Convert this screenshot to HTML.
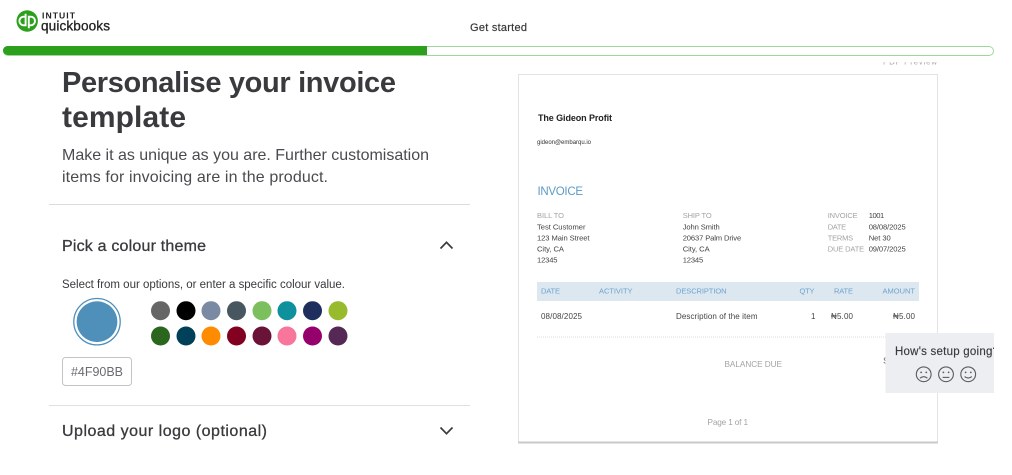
<!DOCTYPE html>
<html lang="en">
<head>
<meta charset="utf-8">
<title>Personalise your invoice template</title>
<style>
html,body{margin:0;padding:0;background:#fff;width:1012px;height:475px;overflow:hidden}
svg{display:block;position:absolute;left:0;top:0}
text{font-family:"Liberation Sans",sans-serif;white-space:pre}
.d{font-size:7.6px;fill:#444}
.r{font-size:8px;fill:#444}
.l{font-size:7.5px;fill:#a3a3a3}
.h{font-size:7.5px;fill:#6fa3cc}
</style>
</head>
<body>
<svg width="1012" height="475" viewBox="0 0 1012 475" xmlns="http://www.w3.org/2000/svg">
<defs>
<clipPath id="c1"><rect x="880" y="62.3" width="60" height="2.5"/></clipPath>
<clipPath id="c2"><rect x="885" y="333" width="109" height="60"/></clipPath>
</defs>
<rect width="1012" height="475" fill="#fff"/>

<!-- logo -->
<circle cx="27.2" cy="21" r="10.7" fill="#2ca01c"/>
<g fill="none" stroke="#fff" stroke-width="1.9">
<path d="M26 16.7h-2.3a4.3 4.3 0 0 0 0 8.6H25.6V13.8"/>
<path d="M28.4 25.3h2.3a4.3 4.3 0 0 0 0-8.6H28.8V28.2"/>
</g>
<text x="42" y="18.5" font-size="8.6" font-weight="700" fill="#222" textLength="33" lengthAdjust="spacing">INTUIT</text>
<text x="41" y="30.5" font-size="13.6" fill="#222" stroke="#222" stroke-width=".3" textLength="69" lengthAdjust="spacing">quickbooks</text>

<text x="470" y="31" font-size="11" fill="#333" stroke="#333" stroke-width=".15" textLength="57" lengthAdjust="spacing">Get started</text>

<!-- progress -->
<rect x="3.5" y="46.5" width="990" height="9" rx="4.5" fill="#fff" stroke="#9fd69a"/>
<path d="M7.5 46H427V55H7.5a4.5 4.5 0 0 1 0-9z" fill="#2ca01c"/>

<!-- left column -->
<text x="62" y="92" font-size="29" font-weight="700" fill="#393a3d" textLength="334" lengthAdjust="spacing">Personalise your invoice</text>
<text x="62" y="127" font-size="30" font-weight="700" fill="#393a3d" textLength="124" lengthAdjust="spacing">template</text>
<text x="62" y="160" font-size="16" fill="#4a4b4f" textLength="367" lengthAdjust="spacing">Make it as unique as you are. Further customisation</text>
<text x="62" y="182" font-size="16" fill="#4a4b4f" textLength="266" lengthAdjust="spacing">items for invoicing are in the product.</text>

<rect x="49" y="204" width="421" height="1" fill="#dcdcdc"/>
<text x="62" y="251" font-size="16" fill="#393a3d" stroke="#393a3d" stroke-width=".3" textLength="144" lengthAdjust="spacing">Pick a colour theme</text>
<path d="M440.5 248.5L446.5 242.3L452.5 248.5" fill="none" stroke="#393a3d" stroke-width="1.7"/>

<text x="62" y="288" font-size="11.5" fill="#393a3d" textLength="283" lengthAdjust="spacing">Select from our options, or enter a specific colour value.</text>

<circle cx="97" cy="321.7" r="23.2" fill="#fff" stroke="#4f90bb" stroke-width="1.3"/>
<circle cx="97" cy="321.7" r="20.4" fill="#4f90bb"/>

<g>
<circle cx="160.5" cy="310.7" r="9.5" fill="#666666"/>
<circle cx="186" cy="310.7" r="9.5" fill="#000000"/>
<circle cx="211" cy="310.7" r="9.5" fill="#7a8aa3"/>
<circle cx="236.5" cy="310.7" r="9.5" fill="#47565f"/>
<circle cx="262" cy="310.7" r="9.5" fill="#7bbf5e"/>
<circle cx="287" cy="310.7" r="9.5" fill="#0e919c"/>
<circle cx="312.5" cy="310.7" r="9.5" fill="#1e2f5e"/>
<circle cx="338" cy="310.7" r="9.5" fill="#97bb2c"/>
<circle cx="160.5" cy="336" r="9.5" fill="#2a661e"/>
<circle cx="186" cy="336" r="9.5" fill="#004058"/>
<circle cx="211" cy="336" r="9.5" fill="#ff8c00"/>
<circle cx="236.5" cy="336" r="9.5" fill="#820020"/>
<circle cx="262" cy="336" r="9.5" fill="#6b1238"/>
<circle cx="287" cy="336" r="9.5" fill="#f8759c"/>
<circle cx="312.5" cy="336" r="9.5" fill="#96006c"/>
<circle cx="338" cy="336" r="9.5" fill="#552855"/>
</g>

<rect x="62.5" y="357.5" width="69" height="28" rx="3" fill="#fff" stroke="#c4c4c4"/>
<text x="71" y="376" font-size="12.5" fill="#6b6c72" textLength="52" lengthAdjust="spacing">#4F90BB</text>

<rect x="49" y="405" width="421" height="1" fill="#dfdfe6"/>
<text x="62" y="436" font-size="16" fill="#393a3d" stroke="#393a3d" stroke-width=".3" textLength="205" lengthAdjust="spacing">Upload your logo (optional)</text>
<path d="M440.5 427.5L446.5 433.7L452.5 427.5" fill="none" stroke="#393a3d" stroke-width="1.7"/>

<!-- preview -->
<text x="883" y="64.5" font-size="8" fill="#a5a5a5" clip-path="url(#c1)" textLength="54" lengthAdjust="spacing">PDF Preview</text>
<rect x="518.5" y="74.5" width="419" height="368" fill="#fff" stroke="#e4e4e4"/>
<rect x="518" y="441.5" width="420" height="2" fill="#c9c9c9"/>

<text x="538" y="121" font-size="9" font-weight="700" fill="#222" textLength="74" lengthAdjust="spacing">The Gideon Profit</text>
<text x="537" y="144" font-size="6" fill="#333" textLength="54" lengthAdjust="spacing">gideon@embarqu.io</text>
<text x="537.5" y="195" font-size="11.5" fill="#5b9bc6" textLength="45.5" lengthAdjust="spacing">INVOICE</text>

<text class="l" x="537" y="218" textLength="27" lengthAdjust="spacing">BILL TO</text>
<text class="d" x="537" y="229.5" textLength="48.5" lengthAdjust="spacing">Test Customer</text>
<text class="d" x="537" y="240.5" textLength="52.5" lengthAdjust="spacing">123 Main Street</text>
<text class="d" x="537" y="251.7" textLength="27" lengthAdjust="spacing">City, CA</text>
<text class="d" x="537" y="262.7" textLength="20.5" lengthAdjust="spacing">12345</text>

<text class="l" x="682.7" y="218" textLength="29" lengthAdjust="spacing">SHIP TO</text>
<text class="d" x="682.7" y="229.5" textLength="37" lengthAdjust="spacing">John Smith</text>
<text class="d" x="682.7" y="240.5" textLength="58.5" lengthAdjust="spacing">20637 Palm Drive</text>
<text class="d" x="682.7" y="251.7" textLength="27" lengthAdjust="spacing">City, CA</text>
<text class="d" x="682.7" y="262.7" textLength="20.5" lengthAdjust="spacing">12345</text>

<text class="l" x="827.7" y="218" textLength="30" lengthAdjust="spacing">INVOICE</text>
<text class="l" x="827.7" y="229.5" textLength="18.5" lengthAdjust="spacing">DATE</text>
<text class="l" x="827.7" y="240.5" textLength="25.5" lengthAdjust="spacing">TERMS</text>
<text class="l" x="827.7" y="251.7" textLength="36.5" lengthAdjust="spacing">DUE DATE</text>
<text class="d" x="868.7" y="218" textLength="15.5" lengthAdjust="spacing">1001</text>
<text class="d" x="868.7" y="229.5" textLength="37" lengthAdjust="spacing">08/08/2025</text>
<text class="d" x="868.7" y="240.5" textLength="22" lengthAdjust="spacing">Net 30</text>
<text class="d" x="868.7" y="251.7" textLength="37" lengthAdjust="spacing">09/07/2025</text>

<rect x="537" y="282" width="382" height="19" fill="#dce7f0"/>
<text class="h" x="541" y="293.5" textLength="19" lengthAdjust="spacing">DATE</text>
<text class="h" x="599" y="293.5" textLength="33.5" lengthAdjust="spacing">ACTIVITY</text>
<text class="h" x="676" y="293.5" textLength="50.5" lengthAdjust="spacing">DESCRIPTION</text>
<text class="h" x="799.5" y="293.5" textLength="15" lengthAdjust="spacing">QTY</text>
<text class="h" x="834" y="293.5" textLength="19" lengthAdjust="spacing">RATE</text>
<text class="h" x="882.5" y="293.5" textLength="32.5" lengthAdjust="spacing">AMOUNT</text>

<text class="r" x="541" y="319" textLength="41" lengthAdjust="spacing">08/08/2025</text>
<text class="r" x="676" y="319" textLength="81.5" lengthAdjust="spacing">Description of the item</text>
<text class="r" x="811" y="319" textLength="3.5" lengthAdjust="spacing">1</text>
<text class="r" x="831" y="319" textLength="22" lengthAdjust="spacing">₦5.00</text>
<text class="r" x="893" y="319" textLength="22" lengthAdjust="spacing">₦5.00</text>

<line x1="537" y1="337" x2="919" y2="337" stroke="#dedede" stroke-dasharray="1 1"/>
<text x="724.5" y="367" font-size="8.2" fill="#a3a3a3" textLength="57.5" lengthAdjust="spacing">BALANCE DUE</text>
<text x="883.5" y="363.5" font-size="8" fill="#555">$5.00</text>
<text x="707.5" y="425" font-size="8.2" fill="#a3a3a3" textLength="40.5" lengthAdjust="spacing">Page 1 of 1</text>

<!-- feedback -->
<rect x="885.5" y="333" width="108.5" height="60" fill="#eceef1"/>
<text x="895" y="355" font-size="11.5" fill="#393a3d" stroke="#393a3d" stroke-width=".15" clip-path="url(#c2)" textLength="104" lengthAdjust="spacing">How's setup going?</text>
<g fill="none" stroke="#5a5b60" stroke-width="1.1">
<circle cx="923.7" cy="374.3" r="7.4"/>
<circle cx="946" cy="374.3" r="7.4"/>
<circle cx="968.2" cy="374.3" r="7.4"/>
<path d="M920 378.2q3.7-3 7.4 0"/>
<path d="M942.6 377.4h6.8"/>
<path d="M964.6 376.6q3.6 3 7.2 0"/>
</g>
<g fill="#5a5b60">
<circle cx="921.1" cy="372.4" r=".9"/><circle cx="926.3" cy="372.4" r=".9"/>
<circle cx="943.4" cy="372.4" r=".9"/><circle cx="948.6" cy="372.4" r=".9"/>
<circle cx="965.6" cy="372.4" r=".9"/><circle cx="970.8" cy="372.4" r=".9"/>
</g>
</svg>
</body>
</html>
